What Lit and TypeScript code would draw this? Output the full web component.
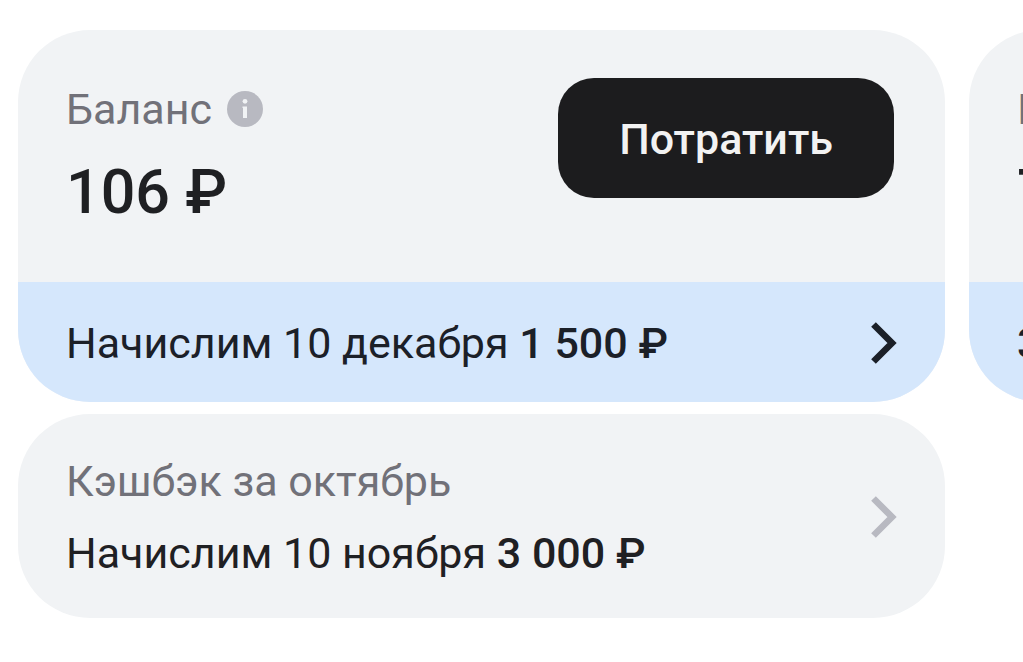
import { LitElement, html, css, svg } from "lit";
import { customElement } from "lit/decorators.js";

const chevron = svg`<path d="M2.5 2.5 L21 21 L2.5 39.5" fill="none" stroke="currentColor" stroke-width="6.6"/>`;

@customElement("app-root")
class AppRoot extends LitElement {
  static styles = css`
    :host { display: block; overflow: hidden; font-family: Roboto, sans-serif; color: #1f2023; background: #fff; min-height: 100vh; }
    * { box-sizing: border-box; }
    .track { display: flex; align-items: flex-start; gap: 24px; padding: 30px 0 0 18px; overflow: hidden; }
    .column { flex: 0 0 calc(100% - 78px); display: flex; flex-direction: column; gap: 12px; }
    .card { border-radius: 72px; background: #f1f3f5; overflow: hidden; }
    .top { display: flex; justify-content: space-between; align-items: flex-start; padding: 48px 51px 48px 48px; }
    .label { display: flex; align-items: center; gap: 15px; font-size: 43px; line-height: 60px; padding-top: 1px; color: #717179; }
    .amount { margin-top: 12px; font-size: 61px; line-height: 83px; font-weight: 500; }
    .spend { font: inherit; font-size: 43px; line-height: 48px; font-weight: 500; color: #f2f2f2; background: #1c1c1e; border: 0; border-radius: 36px; padding: 37px 61px 35px; }
    .row { display: flex; justify-content: space-between; align-items: center; color: inherit; text-decoration: none; padding: 2px 48px 0; font-size: 43px; }
    .accrual { background: #d5e7fc; min-height: 120px; color: #1b2028; }
    .history { min-height: 204px; }
    .line { display: block; line-height: 72px; white-space: nowrap; }
    .muted { color: #717179; }
    b { font-weight: 500; }
    .pale { color: #b8b9c1; }
    svg { flex: none; display: block; }
  `;
  render() {
    return html`<main class="track">
      <div class="column">
        <section class="card">
          <div class="top">
            <div>
              <div class="label">Баланс <svg width="36" height="36" viewBox="0 0 36 36" aria-hidden="true"><circle cx="18" cy="18" r="18" fill="#b8b9c1"/><circle cx="18" cy="10.3" r="2.4" fill="#f1f3f5"/><path d="M15.5 15.5h4.5v11.5h-4v-10h-.5z" fill="#f1f3f5"/></svg></div>
              <div class="amount">106 ₽</div>
            </div>
            <button class="spend">Потратить</button>
          </div>
          <a class="row accrual" href="#"><span class="line">Начислим 10 декабря <b>1 500 ₽</b></span><svg width="26" height="43" viewBox="0 0 26 43" aria-hidden="true">${chevron}</svg></a>
        </section>
        <a class="card row history" href="#"><span><span class="line muted">Кэшбэк за октябрь</span><span class="line">Начислим 10 ноября <b>3 000 ₽</b></span></span><svg class="pale" width="26" height="43" viewBox="0 0 26 43" aria-hidden="true">${chevron}</svg></a>
      </div>
      <div class="column">
        <section class="card">
          <div class="top"><div><div class="label">К</div><div class="amount">7</div></div></div>
          <a class="row accrual" href="#"><span class="line"><b>3</b></span></a>
        </section>
      </div>
    </main>`;
  }
}
